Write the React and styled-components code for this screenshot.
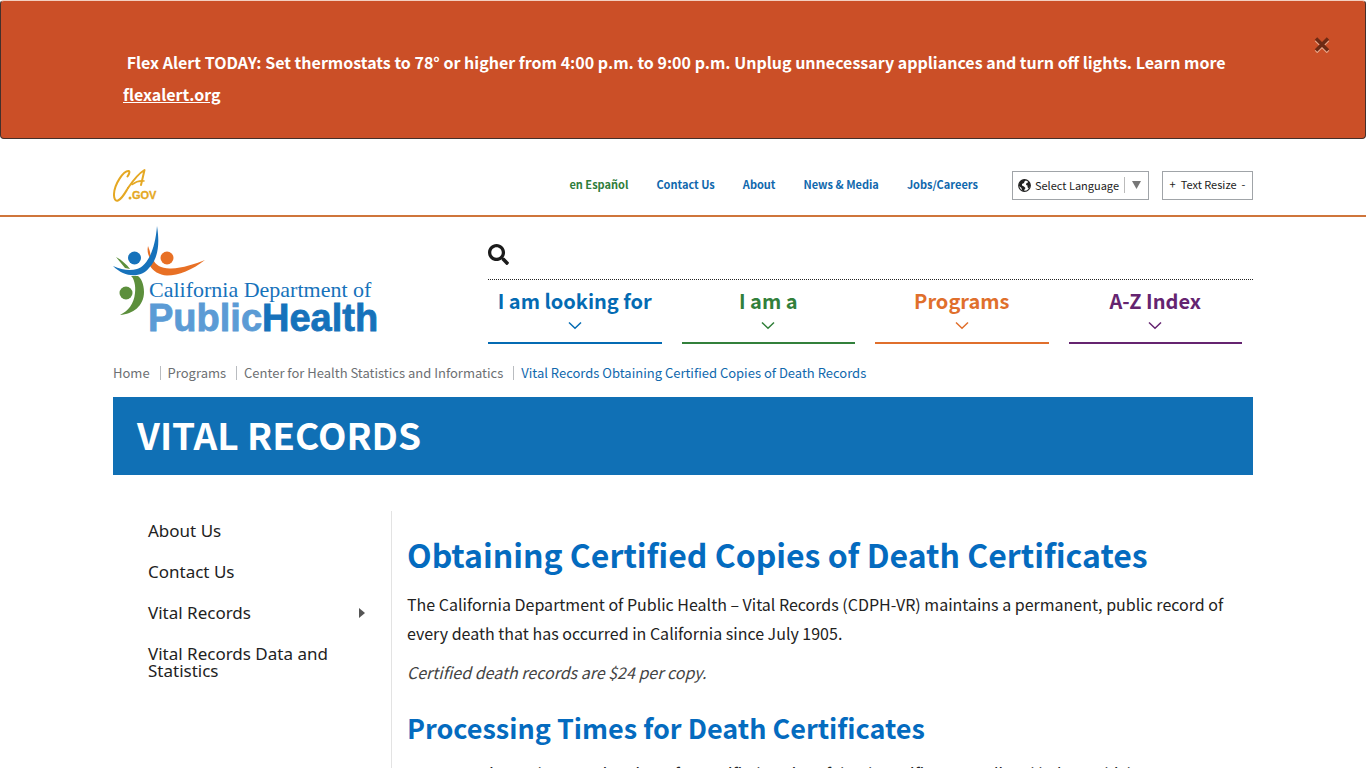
import React from 'react'
import styled, { createGlobalStyle } from 'styled-components'
import { FaSearch } from 'react-icons/fa'

const sans = '"Noto Sans CJK SC", "Noto Sans", sans-serif'

const GlobalStyle = createGlobalStyle`
    * {
        box-sizing: border-box;
    }
    body {
        margin: 0;
        background: #fff;
        color: #222;
        font-family: ${sans};
        font-size: 16px;
        overflow-x: hidden;
    }
    html {
        scrollbar-width: none;
    }
    h1, h2, p, ul, ol {
        margin: 0;
        padding: 0;
    }
    ul, ol {
        list-style: none;
    }
    a {
        color: inherit;
        text-decoration: none;
    }
    button {
        font-family: inherit;
        cursor: pointer;
    }
`

const Container = styled.div`
    max-width: 1140px;
    margin: 0 auto;
`

const { Alert, AlertText, AlertLink, Close } = {
    Alert: styled.div`
        display: flex;
        align-items: flex-start;
        padding: 32px 34px 15px 122px;
        background: #cb4f27;
        border: 1px solid #44302b;
        border-top-color: #f3cfc0;
        border-radius: 4px;
    `,
    AlertText: styled.p`
        flex: 1;
        padding: 13px 0;
        color: #fff;
        font-size: 16px;
        font-weight: 700;
        line-height: 32px;
    `,
    AlertLink: styled.a`
        display: block;
        width: max-content;
        text-decoration: underline;
    `,
    Close: styled.button`
        display: flex;
        width: 18px;
        padding: 4px 0;
        border: 0;
        background: none;
    `
}

const { Utility, UtilityBar, StateLogo, UtilityLinks, UtilityLink, Language, LanguageText, Resize, ResizeButton } = {
    Utility: styled.div`
        margin-top: 23px;
        border-bottom: 2px solid #cf753b;
    `,
    UtilityBar: styled(Container)`
        display: flex;
        align-items: center;
        height: 53px;
        padding-bottom: 6px;
    `,
    StateLogo: styled.a`
        display: flex;
    `,
    UtilityLinks: styled.ul`
        display: flex;
        gap: 28px;
        margin-left: auto;
        margin-right: 34px;
        padding-bottom: 3px;
    `,
    UtilityLink: styled.a`
        display: block;
        color: ${props => props.$color || '#1068ad'};
        font-size: 11px;
        font-weight: 700;
        line-height: 16px;
    `,
    Language: styled.button`
        display: flex;
        align-items: center;
        height: 29px;
        margin-right: 13px;
        padding: 0 6px 1px 5px;
        border: 1px solid #a0a4a8;
        background: #fff;
        color: #222;
        font-size: 11px;
    `,
    LanguageText: styled.span`
        margin: 0 5px 0 4px;
    `,
    Resize: styled.div`
        display: flex;
        align-items: center;
        justify-content: center;
        gap: 5px;
        width: 91px;
        height: 29px;
        padding-bottom: 3px;
        border: 1px solid #a0a4a8;
        font-size: 11px;
    `,
    ResizeButton: styled.button`
        padding: 0;
        border: 0;
        background: none;
        color: #222;
        font-size: 11px;
    `
}

const { Header, Logo, HeaderRight, SearchRow, SearchButton, Nav, NavItem } = {
    Header: styled(Container)`
        display: flex;
        justify-content: space-between;
    `,
    Logo: styled.a`
        display: block;
        padding-top: 9px;
        svg {
            display: block;
        }
    `,
    HeaderRight: styled.div`
        flex: 0 0 765px;
    `,
    SearchRow: styled.div`
        display: flex;
        align-items: center;
        height: 63px;
        padding-top: 12px;
        border-bottom: 1px dotted #222;
    `,
    SearchButton: styled.button`
        display: flex;
        padding: 0;
        border: 0;
        background: none;
        color: #1b1b1b;
    `,
    Nav: styled.nav`
        display: grid;
        grid-template-columns: repeat(4, 1fr);
        gap: 20px;
        padding-right: 11px;
    `,
    NavItem: styled.a`
        display: flex;
        flex-direction: column;
        align-items: center;
        height: 64px;
        padding-top: 5px;
        border-bottom: 2px solid ${props => props.$color};
        color: ${props => props.$color};
        font-size: 20px;
        font-weight: 700;
        line-height: 32px;
        white-space: nowrap;
        svg {
            margin-top: 4px;
        }
    `
}

const { Crumbs, Crumb, Banner } = {
    Crumbs: styled.ol`
        display: flex;
        padding: 18px 0 14px;
        font-size: 13px;
        line-height: 21px;
    `,
    Crumb: styled.li`
        display: flex;
        align-items: center;
        color: ${props => (props.$current ? '#1068ad' : '#6d7073')};
        &:not(:first-child)::before {
            content: '';
            width: 1px;
            height: 14px;
            margin: 0 7px 0 10px;
            background: #b9bcc0;
        }
    `,
    Banner: styled.h1`
        padding: 0 24px 4px;
        background: #1070b5;
        color: #fff;
        font-size: 37px;
        font-weight: 700;
        line-height: 74px;
    `
}

const Text = styled.p`
    margin: 10px 0;
    font-size: 16px;
    line-height: 29px;
`

const { Columns, Side, SideLink, Main, Title, Subtitle, Note } = {
    Columns: styled.div`
        display: grid;
        grid-template-columns: 279px 1fr;
        margin-top: 36px;
    `,
    Side: styled.nav`
        padding: 0 26px 0 35px;
        border-right: 1px solid #e3e3e3;
    `,
    SideLink: styled.a`
        display: flex;
        align-items: center;
        justify-content: space-between;
        padding: 11px 0 13px;
        font-family: "Noto Sans", sans-serif;
        font-size: 17px;
        line-height: 17px;
    `,
    Main: styled.main`
        padding: 20px 20px 0 15px;
    `,
    Title: styled.h2`
        margin-bottom: 13px;
        color: #046bbf;
        font-size: 32px;
        font-weight: 700;
        line-height: 46px;
    `,
    Subtitle: styled.h2`
        margin: 20px 0 10px;
        color: #046bbf;
        font-size: 27px;
        font-weight: 700;
        line-height: 42px;
    `,
    Note: styled(Text)`
        color: #444;
        font-style: italic;
    `
}

const links = [
    { label: 'en Español', color: '#2e7d3b' },
    { label: 'Contact Us' },
    { label: 'About' },
    { label: 'News & Media' },
    { label: 'Jobs/Careers' }
]

const navItems = [
    { label: 'I am looking for', color: '#046bb3' },
    { label: 'I am a', color: '#32803b' },
    { label: 'Programs', color: '#e06f2c' },
    { label: 'A-Z Index', color: '#652470' }
]

const crumbs = ['Home', 'Programs', 'Center for Health Statistics and Informatics', 'Vital Records Obtaining Certified Copies of Death Records']

const sideLinks = [
    { label: 'About Us' },
    { label: 'Contact Us' },
    { label: 'Vital Records', more: true },
    { label: 'Vital Records Data and Statistics' }
]

const CaGovLogo = () =>
    (
        <svg width="46" height="36" viewBox="0 0 46 36" fill="none" stroke="#e5a823" strokeLinecap="round" strokeLinejoin="round" role="img" aria-label="CA.gov">
            <path strokeWidth="2" d="M14.5 8.5C16.5 5.5 17 3.2 15.5 3C10.5 2.7 1.5 16 1 26C.8 31 2.5 33.5 5 32.5C9 31 12 25 15 20" />
            <path strokeWidth="2" d="M15 20C19 14 25 6 31.5 2L28 17" />
            <path strokeWidth="1.6" d="M19 16.5C23 13.5 27 12.5 31 13" />
            <circle cx="17" cy="30" r="1.5" fill="#e5a823" stroke="none" />
            <text x="19" y="31" fill="#e5a823" stroke="#e5a823" strokeWidth=".3" fontFamily="Liberation Sans, sans-serif" fontSize="11" fontWeight="700">GOV</text>
        </svg>
    )

const HealthLogo = () =>
    (
        <svg width="268" height="116" viewBox="0 0 268 116" role="img" aria-label="California Department of Public Health">
            <path fill="#5c8f3c" d="M3 31C9 34 14 39 17 43L12 42C9 38 6 35 3 31Z" />
            <path fill="#5c8f3c" d="M18 50C21 52 23 60 22 67C21 78 15 85 7 89C20 88 31 80 31 66C31 58 28 52 25 50Z" />
            <circle cx="13" cy="67" r="6.5" fill="#5c8f3c" />
            <path fill="#e87025" d="M35 20C34 25 35 29 37 32C38 29 37 25 35 20Z" />
            <path fill="#e87025" d="M40 33C42 39 49 43 58 42.5C70 42 82 38 92 34C79 44 66 49.5 54 49.5C46 49 40 45 37 40Z" />
            <circle cx="54" cy="32" r="6.5" fill="#e87025" />
            <path fill="#1672bb" d="M0 40C9 44 17 45 24 43C34 40 42 25 44 0C47 18 45 33 36 42C28 52 12 52 0 40Z" />
            <circle cx="21.5" cy="32" r="6.5" fill="#1672bb" />
            <text x="36" y="71" fill="#1672bb" fontFamily="Liberation Serif, serif" fontSize="22">California Department of</text>
            <text x="35" y="105" fontFamily="Liberation Sans, sans-serif" fontSize="38" fontWeight="700" strokeWidth=".8">
                <tspan fill="#5b9bd5" stroke="#5b9bd5">Public</tspan>
                <tspan fill="#1672bb" stroke="#1672bb">Health</tspan>
            </text>
        </svg>
    )

const Globe = () =>
    (
        <svg width="13" height="13" viewBox="0 0 13 13">
            <circle cx="6.5" cy="6.5" r="5.8" fill="#fff" stroke="#222" strokeWidth="1.2" />
            <path fill="#222" d="M1 5L2.5 2L5.5 .7L8 1L6.500 2.500L6 4L4 5L4 6.500L6 7.500L7.500 9L6.500 10.500L6 12.500L4 11.500L3.500 9L1 7Z" />
            <path fill="#222" d="M10 2L12 4.500L12.300 7L10.500 9.500L9.500 8L9.500 6.500L8 6L8.500 4L10 3.500Z" />
        </svg>
    )

const Chevron = () =>
    (
        <svg width="14" height="9" viewBox="0 0 14 9" fill="none" stroke="currentColor" strokeWidth="1.5">
            <path d="M1 1.5L7 7.2L13 1.5" />
        </svg>
    )

const App = () =>
    (
        <>
            <GlobalStyle />
            <Alert role="alert">
                <AlertText>
                    &nbsp;Flex Alert TODAY: Set thermostats to 78° or higher from 4:00 p.m. to 9:00 p.m. Unplug unnecessary appliances and turn off lights. Learn more
                    <AlertLink href="#">flexalert.org</AlertLink>
                </AlertText>
                <Close type="button" aria-label="Close">
                    <svg width="18" height="16" viewBox="0 0 18 16" strokeWidth="3.5">
                        <path stroke="#eba98c" d="M3 3L15 15M15 3L3 15" />
                        <path stroke="#6d2a14" d="M3 1.5L15 13.5M15 1.5L3 13.5" />
                    </svg>
                </Close>
            </Alert>

            <Utility>
                <UtilityBar>
                    <StateLogo href="#"><CaGovLogo /></StateLogo>
                    <UtilityLinks>
                        {links.map(({ label, color }) => (
                            <li key={label}><UtilityLink href="#" $color={color}>{label}</UtilityLink></li>
                        ))}
                    </UtilityLinks>
                    <Language type="button">
                        <Globe />
                        <LanguageText>Select Language</LanguageText>
                        <svg width="18" height="16" viewBox="0 0 18 16">
                            <path d="M.5 0V16" stroke="#bbb" />
                            <path d="M8 4H17L12.5 12Z" fill="#777" />
                        </svg>
                    </Language>
                    <Resize>
                        <ResizeButton type="button" aria-label="Increase text size">+</ResizeButton>
                        <span>Text Resize</span>
                        <ResizeButton type="button" aria-label="Decrease text size">-</ResizeButton>
                    </Resize>
                </UtilityBar>
            </Utility>

            <Header as="header">
                <Logo href="#"><HealthLogo /></Logo>
                <HeaderRight>
                    <SearchRow>
                        <SearchButton type="button" aria-label="Search"><FaSearch size={21} /></SearchButton>
                    </SearchRow>
                    <Nav>
                        {navItems.map(({ label, color }) => (
                            <NavItem key={label} href="#" $color={color}>
                                {label}
                                <Chevron />
                            </NavItem>
                        ))}
                    </Nav>
                </HeaderRight>
            </Header>

            <Container>
                <Crumbs>
                    {crumbs.map((label, i) => (
                        <Crumb key={label} $current={i === crumbs.length - 1}><a href="#">{label}</a></Crumb>
                    ))}
                </Crumbs>
                <Banner>VITAL RECORDS</Banner>
                <Columns>
                    <Side>
                        {sideLinks.map(({ label, more }) => (
                            <SideLink key={label} href="#">
                                {label}
                                {more && <svg width="6" height="10" viewBox="0 0 6 10"><path fill="#555" d="M0 0L6 5L0 10Z" /></svg>}
                            </SideLink>
                        ))}
                    </Side>
                    <Main>
                        <Title>Obtaining Certified Copies of Death Certificates</Title>
                        <Text>The California Department of Public Health – Vital Records (CDPH-VR) maintains a permanent, public record of every death that has occurred in California since July 1905.</Text>
                        <Note>Certified death records are $24 per copy.</Note>
                        <Subtitle>Processing Times for Death Certificates</Subtitle>
                        <Text>Current estimated processing times for certified copies of death certificates are listed below, which</Text>
                    </Main>
                </Columns>
            </Container>
        </>
    )

export default App
